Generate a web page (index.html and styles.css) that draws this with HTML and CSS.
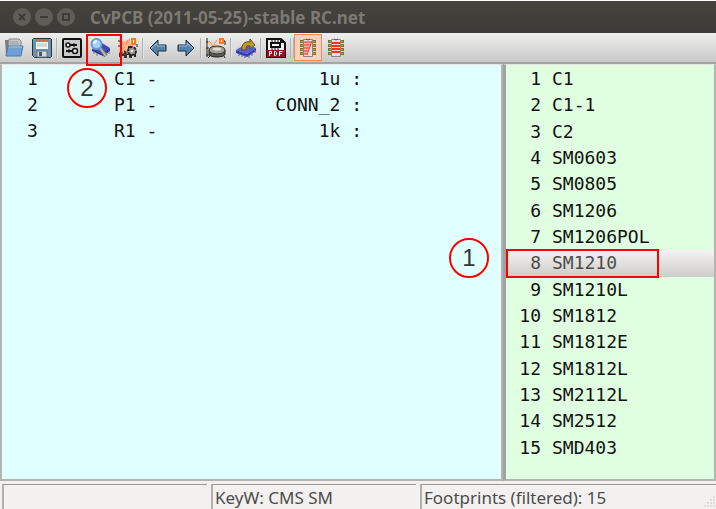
FILE: index.html
```html
<!DOCTYPE html>
<html lang="en">
<head>
  <meta charset="UTF-8">
  <meta name="viewport" content="width=device-width, initial-scale=1.0">
  <title>CvPCB</title>
  <link rel="stylesheet" href="styles.css">
</head>
<body>
  <div class="window">
    <header class="titlebar">
      <button class="win-btn" aria-label="Close"><svg viewBox="0 0 18 18"><path d="M6 6l6 6M12 6l-6 6"/></svg></button>
      <button class="win-btn" aria-label="Minimize"><svg viewBox="0 0 18 18"><path d="M5 9h8"/></svg></button>
      <button class="win-btn" aria-label="Maximize"><svg viewBox="0 0 18 18"><path d="M6 6h6v6h-6z"/></svg></button>
      <h1 class="title">CvPCB (2011-05-25)-stable RC.net</h1>
    </header>

    <nav class="toolbar">
      <button class="tool" aria-label="Open">
        <svg viewBox="0 0 20 20">
          <path d="M1 2h7l1 2h8v13H2z" fill="#777b7d"/>
          <path d="M5 1h10l2 2v8H4z" fill="#c4c7c7" stroke="#8a8d8d"/>
          <path d="M6 4h8M6 6h9" stroke="#999"/>
          <path d="M4 8h15l-2 10H2z" fill="#6f9ed2" stroke="#4a7ab2"/>
          <path d="M5 9h13" stroke="#a8c8e9"/>
        </svg>
      </button>
      <button class="tool" aria-label="Save">
        <svg viewBox="0 0 20 20">
          <path d="M1.500 .5h17l1 1v17l-1 1h-16l-2-2v-16z" fill="#6f91ad" stroke="#25313b"/>
          <path d="M4 1h12v10H4z" fill="#f4f4f3"/>
          <path d="M4 1h12v3H4z" fill="#d66a5e"/>
          <path d="M5 6h10M5 8h10" stroke="#bbb"/>
          <path d="M5 13h10v6H5z" fill="#d6dad9" stroke="#65737d"/>
          <path d="M7 14h3v4H7z" fill="#40586a"/>
        </svg>
      </button>
      <span class="sep"></span>
      <button class="tool" aria-label="Configuration">
        <svg viewBox="0 0 20 20">
          <rect x="1" y="1" width="18" height="18" rx="1" fill="#c9c9c9" stroke="#111" stroke-width="2"/>
          <path d="M8 7h7M4 13h7" stroke="#111" stroke-width="2"/>
          <circle cx="6" cy="7" r="2" fill="#eee" stroke="#111" stroke-width="1.500"/>
          <circle cx="13" cy="13" r="2.500" fill="#eee" stroke="#111" stroke-width="1.500"/>
          <path d="M12 5v4M7 11v4" stroke="#111"/>
        </svg>
      </button>
      <button class="tool" aria-label="View selected footprint">
        <svg viewBox="0 0 20 20">
          <path d="M2 11l10-6 8 5-8 7z" fill="#4149c0"/>
          <path d="M2 11l10 5 8-6v3l-7 5-11-5z" fill="#272c88"/>
          <path d="M4 13v3M7 15v3M16 14v4M19 12v4" stroke="#6a6f9e"/>
          <path d="M10 10l6 8" stroke="#6a6f80" stroke-width="4"/>
          <path d="M10 10l6 8" stroke="#b4b8c6" stroke-width="2"/>
          <circle cx="6.500" cy="6" r="5" fill="#a6d0f5" stroke="#6a9bd0" stroke-width="2"/>
          <path d="M4 6q0-3 3-3" fill="none" stroke="#edf8ff" stroke-width="2"/>
        </svg>
      </button>
      <button class="tool" aria-label="Automatic association">
        <svg viewBox="0 0 20 20">
          <path d="M1 0l5 4 6-4v6l4 2-5 3 1 6-5-4-5 6z" fill="#ffb18c"/>
          <path d="M2 2l4 5M10 2L8 7M1 14l6-5" stroke="#f58a5a"/>
          <path d="M1 2v2M1 7v2M19 6v3" stroke="#24231f"/>
          <path d="M14 1h3v5h-3z" fill="#fff" stroke="#ff7918" stroke-width="2"/>
          <path d="M1 19v-4l3-2 2 3v-4l3 2 2-2 3 3v5h-3v-3H9v3H6v-2H4v2z" fill="#38352f"/>
          <circle cx="14" cy="13" r="4" fill="#a6a29a" stroke="#2d2c29" stroke-width="2" stroke-dasharray="3 1"/>
          <path d="M12 16v3M17 16v3M10 9h3M4 15v2" stroke="#24231f" stroke-width="2"/>
          <path d="M3 15h2M8 15h2" stroke="#aaa79d"/>
          <circle cx="14" cy="13" r="1" fill="#fff"/>
        </svg>
      </button>
      <span class="sep"></span>
      <button class="tool" aria-label="Previous">
        <svg viewBox="0 0 20 20"><path d="M2 10l8-8v5h8v6h-8v5z" fill="#5882a8" stroke="#182e42"/><path d="M4 10l5-5v3h8" fill="none" stroke="#9dbbd5"/></svg>
      </button>
      <button class="tool" aria-label="Next">
        <svg viewBox="0 0 20 20"><path d="M18 10l-8-8v5H2v6h8v5z" fill="#5882a8" stroke="#182e42"/><path d="M3 8h8V5l5 5" fill="none" stroke="#9dbbd5"/></svg>
      </button>
      <span class="sep"></span>
      <button class="tool" aria-label="Delete associations">
        <svg viewBox="0 0 20 20">
          <path d="M1 0v19M0 4h4M0 10h3M0 17h5" stroke="#24231f"/>
          <path d="M2 3l5 2 4-4v7l-8 3z" fill="#f7cdb8"/>
          <path d="M3 3l4 5 4-6M3 10l4-2" stroke="#f19a75" fill="none"/>
          <path d="M14 1h3v4h-3z" fill="#fff" stroke="#ff7918" stroke-width="2"/>
          <path d="M18 3h1v4" stroke="#222" fill="none"/>
          <path d="M3 12v4c0 4 16 4 16 0v-4z" fill="#5b5b52" stroke="#20201d"/>
          <ellipse cx="11" cy="12" rx="8" ry="4" fill="#a2a298" stroke="#333"/>
          <ellipse cx="11" cy="11" rx="4" ry="1.500" fill="#dedfd5"/>
          <path d="M4 18l-2 2M18 18l1 2" stroke="#222"/>
        </svg>
      </button>
      <span class="sep"></span>
      <button class="tool" aria-label="Load footprint documentation">
        <svg viewBox="0 0 20 20">
          <path d="M0 12l10-6 10 4-9 6z" fill="#565ed0"/>
          <path d="M0 12l11 4 9-6v3l-9 6-11-4z" fill="#3139b4"/>
          <path d="M3 15v3M6 16v3M9 17v3M13 17v3M16 14v4M19 12v3" stroke="#555aae"/>
          <path d="M6 12C5 6 9 3 14 4V1l5 6-5 4V8c-4-1-4 1-4 4z" fill="#c29a25" stroke="#594b20"/>
        </svg>
      </button>
      <span class="sep"></span>
      <button class="tool" aria-label="Display footprint list in PDF">
        <svg viewBox="0 0 20 20">
          <path d="M1 1h14l4 4v14H1z" fill="#f5f5f3" stroke="#111" stroke-width="2"/>
          <path d="M14 1v4h5" fill="#111"/>
          <path d="M5 5h9v4H5z" fill="#fff" stroke="#111" stroke-width="2"/>
          <path d="M6 2v2M9 2v2M12 2v2M6 10v2M9 10v2M12 10v2" stroke="#111"/>
          <path d="M1 12h18v7H1z" fill="#8d1822"/>
          <path d="M3.500 18v-4.500h2v2h-2M8.500 13.500h1l1 1v2l-1 1h-1zM13.500 18v-4.500h3M13 15.500h3" fill="none" stroke="#fff"/>
        </svg>
      </button>
      <span class="sep double"></span>
      <button class="tool pressed" aria-label="Filtered footprint list" aria-pressed="true">
        <svg viewBox="0 0 20 20">
          <path d="M2 3.500h16M2 7.500h16M2 11.500h16M2 15.500h16" stroke="#77732a" stroke-width="3"/>
          <path d="M3 3.500h14M3 7.500h14M3 11.500h14M3 15.500h14" stroke="#b3ac25"/>
          <path d="M5.500 1.500h9v17h-9z" fill="#f1dfd8" stroke="#8b8581"/>
          <path d="M6 4h8l-5 13H6z" fill="#f9b0a6"/>
          <path d="M6 4h8M6 7h7M6 10h5M6 13h4M6 16h3" stroke="#fa2d2d"/>
          <path d="M14 3L9 17" stroke="#fa4444"/>
          <path d="M8 1q2 2 4 0" fill="none" stroke="#555"/>
        </svg>
      </button>
      <button class="tool" aria-label="Full footprint list" aria-pressed="false">
        <svg viewBox="0 0 20 20">
          <path d="M2 3.500h16M2 7.500h16M2 11.500h16M2 15.500h16" stroke="#77732a" stroke-width="3"/>
          <path d="M3 3.500h14M3 7.500h14M3 11.500h14M3 15.500h14" stroke="#b3ac25"/>
          <path d="M5.500 1.500h9v17h-9z" fill="#e2e0df" stroke="#8b8581"/>
          <path d="M6 5h8M6 8h8M6 11h8M6 14h8" stroke="#fa2d2d" stroke-width="2"/>
          <path d="M8 1q2 2 4 0" fill="none" stroke="#555"/>
        </svg>
      </button>
    </nav>

    <main class="panes">
      <section class="pane components">
        <table class="component-table">
          <tr><td class="num">1</td><td class="ref">C1 -</td><td class="value">1u :</td></tr>
          <tr><td class="num">2</td><td class="ref">P1 -</td><td class="value">CONN_2 :</td></tr>
          <tr><td class="num">3</td><td class="ref">R1 -</td><td class="value">1k :</td></tr>
        </table>
      </section>
      <section class="pane footprints">
        <ul class="footprint-list">
          <li><span class="index">1</span>C1</li>
          <li><span class="index">2</span>C1-1</li>
          <li><span class="index">3</span>C2</li>
          <li><span class="index">4</span>SM0603</li>
          <li><span class="index">5</span>SM0805</li>
          <li><span class="index">6</span>SM1206</li>
          <li><span class="index">7</span>SM1206POL</li>
          <li class="selected"><span class="index">8</span>SM1210<span class="frame row-frame"></span></li>
          <li><span class="index">9</span>SM1210L</li>
          <li><span class="index">10</span>SM1812</li>
          <li><span class="index">11</span>SM1812E</li>
          <li><span class="index">12</span>SM1812L</li>
          <li><span class="index">13</span>SM2112L</li>
          <li><span class="index">14</span>SM2512</li>
          <li><span class="index">15</span>SMD403</li>
        </ul>
      </section>
    </main>

    <footer class="statusbar">
      <div class="field"></div>
      <div class="field">KeyW: CMS SM</div>
      <div class="field wide">Footprints (filtered): 15
        <svg class="grip" viewBox="0 0 14 14"><path d="M12 1v2M9 4v2M12 4v2M6 7v2M9 7v2M12 7v2M3 10v2M6 10v2M9 10v2M12 10v2" stroke="#dedbd8" stroke-width="2"/></svg>
      </div>
    </footer>

    <span class="frame tool-frame"></span>
    <span class="step step-one">1</span>
    <span class="step step-two">2</span>
  </div>
</body>
</html>
```

FILE: styles.css
```css
* {
  box-sizing: border-box;
}

body {
  margin: 0;
}

.window {
  position: relative;
  display: flex;
  flex-direction: column;
  height: 100vh;
  overflow: hidden;
  background: #f2f1f0;
}

button {
  padding: 0;
  border: 0;
  background: none;
}

/* title bar */
.titlebar {
  display: flex;
  align-items: center;
  gap: 4px;
  height: 33px;
  padding-left: 13px;
  border-top: 1px solid #fff;
  background: linear-gradient(#45443f, #3c3b37);
}

.win-btn {
  width: 18px;
  height: 18px;
  border-radius: 50%;
  background: #5f5d57;
}

.win-btn svg {
  display: block;
  fill: none;
  stroke: #3c3b37;
  stroke-width: 2;
}

.title {
  margin: 0 0 0 11px;
  color: #7c7972;
  font: bold 17px "Noto Sans", sans-serif;
  white-space: nowrap;
}

/* toolbar */
.toolbar {
  display: flex;
  align-items: center;
  height: 31px;
  border-bottom: 2px solid #a5a4a2;
  background: linear-gradient(#eeeeed, #c9c9c9);
}

.tool {
  display: flex;
  align-items: center;
  justify-content: center;
  width: 28px;
  height: 27px;
}

.tool svg {
  flex: none;
  width: 20px;
  height: 20px;
}

.tool.pressed {
  border: 1px solid #f58a60;
  background: #fbd0bd;
}

.sep {
  width: 2px;
  height: 20px;
  border-left: 1px solid #b5b4b3;
  border-right: 1px solid #e5e5e4;
}

.sep.double {
  width: 4px;
  border-right-color: #b5b4b3;
}

/* lists */
.panes {
  display: flex;
  flex: 1;
  color: #111;
  font: 18px/26px "DejaVu Sans Mono", monospace;
}

.pane {
  border: 2px solid #b5b3b0;
  border-top: 1px solid #e5e5e3;
}

.components {
  flex: 1;
  background: #e0ffff;
}

.footprints {
  width: 213px;
  border-left: 3px solid #a3a19f;
  background: #e0ffe0;
}

.component-table {
  width: 360px;
  margin-top: 1px;
  border-collapse: collapse;
  table-layout: fixed;
}

.component-table td {
  padding: 0;
}

.component-table .num {
  width: 112px;
  padding-left: 25px;
}

.component-table .ref {
  width: 60px;
}

.component-table .value {
  text-align: right;
}

.footprint-list {
  display: grid;
  grid-auto-rows: 1fr;
  height: 395px;
  margin: 1px 0 0;
  padding: 0;
  list-style: none;
}

.footprint-list li {
  position: relative;
  display: flex;
  align-items: center;
  gap: 11px;
}

.index {
  width: 35px;
  text-align: right;
}

.selected {
  background: linear-gradient(#f5f3f2, #ceccc8);
  color: #4c4c4c;
}

/* status bar */
.statusbar {
  display: flex;
  gap: 4px;
  height: 28px;
  padding: 3px 0 0 2px;
  color: #4c4c4c;
  font: 17px/25px "Noto Sans", sans-serif;
}

.field {
  width: 205px;
  padding-left: 2px;
  border-top: 1px solid #9b9997;
  border-left: 2px solid #b2b0ad;
  white-space: nowrap;
}

.field.wide {
  display: flex;
  flex: 1;
  justify-content: space-between;
}

.grip {
  align-self: flex-end;
  width: 14px;
  height: 14px;
}

/* callouts */
.frame {
  position: absolute;
  border: 2px solid #f00;
}

.tool-frame {
  top: 34px;
  left: 86px;
  width: 36px;
  height: 32px;
}

.row-frame {
  top: -1px;
  left: 0;
  width: 153px;
  height: 29px;
}

.step {
  position: absolute;
  width: 40px;
  height: 40px;
  border: 2px solid #f00;
  border-radius: 50%;
  color: #333;
  font: 24px/36px "Liberation Sans", sans-serif;
  text-align: center;
}

.step-one {
  top: 238px;
  right: 227px;
}

.step-two {
  top: 68px;
  left: 67px;
}
```
